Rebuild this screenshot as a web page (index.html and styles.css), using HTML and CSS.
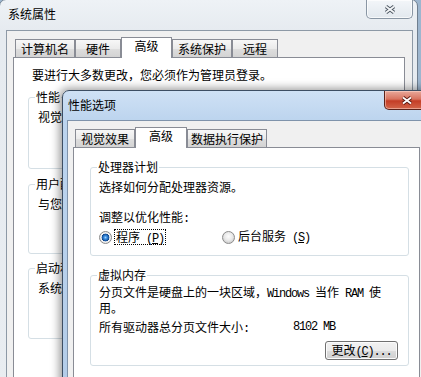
FILE: index.html
```html
<!DOCTYPE html>
<html lang="zh-CN">
<head>
<meta charset="utf-8">
<title>系统属性</title>
<link rel="stylesheet" href="styles.css">
</head>
<body>
<div class="desk">
  <div class="win sys">
    <div class="titlebar">
      <span class="title">系统属性</span>
      <span class="close close-inactive">
        <svg width="12" height="9" viewBox="0 0 12 9"><path d="M2 1.5 L10 7.5 M10 1.5 L2 7.5" stroke="#4b5560" stroke-width="3.6" fill="none"/><path d="M2 1.5 L10 7.5 M10 1.5 L2 7.5" stroke="#f4f6f8" stroke-width="1.8" fill="none"/></svg>
      </span>
    </div>
    <div class="client sys-client">
      <div class="tabs">
        <div class="tab">计算机名</div>
        <div class="tab">硬件</div>
        <div class="tab sel sel-wide">高级</div>
        <div class="tab">系统保护</div>
        <div class="tab">远程</div>
      </div>
      <div class="panel sys-panel">
        <p class="note">要进行大多数更改，您必须作为管理员登录。</p>
        <div class="group g1">
          <div class="legend">性能</div>
          <p class="gtext">视觉效果，处理器计划，内存使用，以及虚拟内存</p>
        </div>
        <div class="group g2">
          <div class="legend">用户配置文件</div>
          <p class="gtext">与您登录有关的桌面设置</p>
        </div>
        <div class="group g3">
          <div class="legend">启动和故障恢复</div>
          <p class="gtext">系统启动、系统失败和调试信息</p>
        </div>
      </div>
    </div>
  </div>

  <div class="win perf">
    <div class="titlebar perf-title">
      <span class="title">性能选项</span>
      <span class="close close-active">
        <svg width="12" height="9" viewBox="0 0 12 9"><path d="M2 1.5 L10 7.5 M10 1.5 L2 7.5" stroke="#5a1a12" stroke-width="3.6" fill="none"/><path d="M2 1.5 L10 7.5 M10 1.5 L2 7.5" stroke="#ffffff" stroke-width="1.8" fill="none"/></svg>
      </span>
    </div>
    <div class="client perf-client">
      <div class="tabs">
        <div class="tab">视觉效果</div>
        <div class="tab sel sel-perf">高级</div>
        <div class="tab tab-narrow">数据执行保护</div>
      </div>
      <div class="panel perf-panel">
        <div class="group pg1">
          <div class="legend">处理器计划</div>
          <p class="ptext t-choose">选择如何分配处理器资源。</p>
          <p class="ptext t-adjust">调整以优化性能<span class="lat">:</span></p>
          <div class="opts">
            <label class="opt opt-first">
              <span class="radio on"></span>
              <span class="focus">程序<span class="lat"> (<u>P</u>)</span></span>
            </label>
            <label class="opt">
              <span class="radio"></span>
              <span class="olabel">后台服务<span class="lat"> (<u>S</u>)</span></span>
            </label>
          </div>
        </div>
        <div class="group pg2">
          <div class="legend">虚拟内存</div>
          <p class="ptext t-page">分页文件是硬盘上的一块区域，<span class="lat">Windows </span>当作<span class="lat"> RAM </span>使<br>用。</p>
          <div class="sizerow">
            <span class="sizelabel">所有驱动器总分页文件大小<span class="lat">:</span></span>
            <span class="lat">8102 MB</span>
          </div>
          <div class="btnrow">
            <button class="btn" type="button">更改<span class="lat">(<u>C</u>)...</span></button>
          </div>
        </div>
      </div>
    </div>
  </div>
</div>
</body>
</html>
```

FILE: styles.css
```css
* { box-sizing: border-box; }
html, body { margin: 0; padding: 0; }
body {
  width: 421px;
  height: 377px;
  overflow: hidden;
  background: #9db6cf;
  font-family: "Noto Sans CJK SC", "Noto Sans", sans-serif;
  font-size: 12px;
  line-height: 14px;
  color: #000;
}
p { margin: 0; }
.lat {
  font-family: "Liberation Mono", "DejaVu Sans Mono", monospace;
  font-size: 12px;
  letter-spacing: -1.2px;
  white-space: pre;
}
.desk { position: relative; width: 421px; height: 377px; overflow: hidden; }

/* windows on the desktop */
.win { position: absolute; border: 1px solid #6f7f90; }
.sys {
  left: -1px; top: -1px;
  width: 419px; height: 420px;
  border-radius: 7px 7px 0 0;
  background: linear-gradient(180deg, #eef2f6 0, #e6ebf0 30px, #e9edf1 100%);
}
.perf {
  left: 62px; top: 90px;
  width: 369px; height: 310px;
  border-color: #3d4e63;
  border-radius: 7px 7px 0 0;
  background: linear-gradient(180deg, #cfe1f5 0, #bcd4ee 30px, #b3cce8 100%);
  box-shadow: -1px 0 9px 2px rgba(0, 0, 0, 0.38);
}

.titlebar { display: flex; justify-content: space-between; align-items: flex-start; height: 30px; }
.sys .titlebar { padding: 0 4px 0 8px; }
.sys .title { margin-top: 7px; }
.perf-title { height: 29px; padding-left: 5px; }
.perf-title .title { margin-top: 7px; }

.close {
  display: flex; align-items: center; justify-content: center;
  width: 47px; height: 19px;
  border: 1px solid #8996a4;
  border-top: 0;
  border-radius: 0 0 5px 5px;
}
.close-inactive {
  background: linear-gradient(180deg, #f3f6f9, #e2e8ee);
  box-shadow: inset 0 0 0 1px rgba(255,255,255,0.7);
}
.close-active {
  width: 46px;
  border-color: #5b221a;
  background: linear-gradient(180deg, #e9a99b 0, #d8735f 45%, #c43d26 55%, #d3654a 100%);
  box-shadow: inset 0 0 0 1px rgba(255,220,210,0.5);
}

/* client areas */
.client { background: #f0f0f0; border: 1px solid #8d99a6; }
.sys-client { margin: 0 4px 0 6px; height: 400px; padding: 6px 7px 0 6px; }
.perf-client { margin: 0 4px; height: 290px; padding: 6px 5px 0 5px; border-color: #7f93ab; }

/* tabs */
.tabs { display: flex; align-items: flex-end; height: 20px; padding-left: 2px; }
.tab {
  height: 18px;
  min-width: 46px;
  padding: 0 5px;
  border: 1px solid #898c95;
  border-bottom: 0;
  text-align: center;
  line-height: 17px;
  white-space: nowrap;
  background: linear-gradient(180deg, #f7f7f7 0, #ebebeb 50%, #dedede 51%, #d3d3d3 100%);
}
.tab-narrow { padding: 0 3px; }
.tab.sel {
  height: 21px;
  margin-bottom: -1px;
  line-height: 16px;
  background: #fff;
  position: relative;
  z-index: 1;
}
.sel-wide { min-width: 51px; }
.sel-perf { min-width: 52px; }

.panel { background: #fff; border: 1px solid #898c95; }
.sys-panel { height: 360px; padding: 10px 0 0 14px; }
.perf-panel { height: 260px; padding: 19px 0 0 16px; }

.note { margin-left: 4px; white-space: nowrap; }

/* group boxes */
.group {
  border: 1px solid #d5dfe5;
  border-radius: 3px;
  padding: 0 0 0 8px;
}
.legend {
  display: table;
  margin: -8px 0 0 -2px;
  padding: 0 1px;
  background: #fff;
  white-space: nowrap;
}
.gtext { margin-top: 6px; white-space: nowrap; padding-left: 1px; }
.g1 { width: 380px; height: 72px; margin-top: 15px; }
.g2 { width: 380px; height: 70px; margin-top: 15px; }
.g3 { width: 380px; height: 71px; margin-top: 14px; }

.pg1 { width: 319px; height: 89px; }
.pg2 { width: 319px; height: 91px; margin-top: 19px; }
.ptext { white-space: nowrap; }
.t-choose { margin-top: 6px; }
.t-adjust { margin-top: 16px; }
.t-page { margin-top: 3px; line-height: 13px; }

.opts { display: flex; align-items: center; height: 16px; margin-top: 3px; }
.opt { display: flex; align-items: center; }
.opt-first { width: 123px; }
.radio {
  width: 13px; height: 13px;
  border-radius: 50%;
  border: 1px solid #8b8b8b;
  background: radial-gradient(circle at 50% 40%, #fdfdfd 0, #e9e9e9 4px, #d4d4d4 6px);
  flex: none;
}
.radio.on {
  background: radial-gradient(circle at 50% 50%, #9fd2ff 0, #3d8fe0 1.5px, #1b5fae 3px, #0f4487 3.6px, #f6f6f6 4.2px, #e2e2e2 6px);
}
.focus {
  margin-left: 2px;
  height: 16px;
  padding: 0 1px;
  border: 1px dotted #000;
  line-height: 14px;
  white-space: nowrap;
}
.olabel { margin-left: 3px; white-space: nowrap; }

.sizerow { display: flex; margin-top: 6px; white-space: nowrap; }
.sizelabel { width: 194px; }
.btnrow { display: flex; justify-content: flex-end; padding-right: 10px; margin-top: 5px; }
.btn {
  width: 73px; height: 19px;
  padding: 0;
  font: inherit;
  line-height: 15px;
  color: #000;
  border: 1px solid #707070;
  border-radius: 3px;
  background: linear-gradient(180deg, #f2f2f2 0, #ebebeb 50%, #dddddd 51%, #cfcfcf 100%);
  box-shadow: inset 0 0 0 1px #fbfbfb;
}
```
